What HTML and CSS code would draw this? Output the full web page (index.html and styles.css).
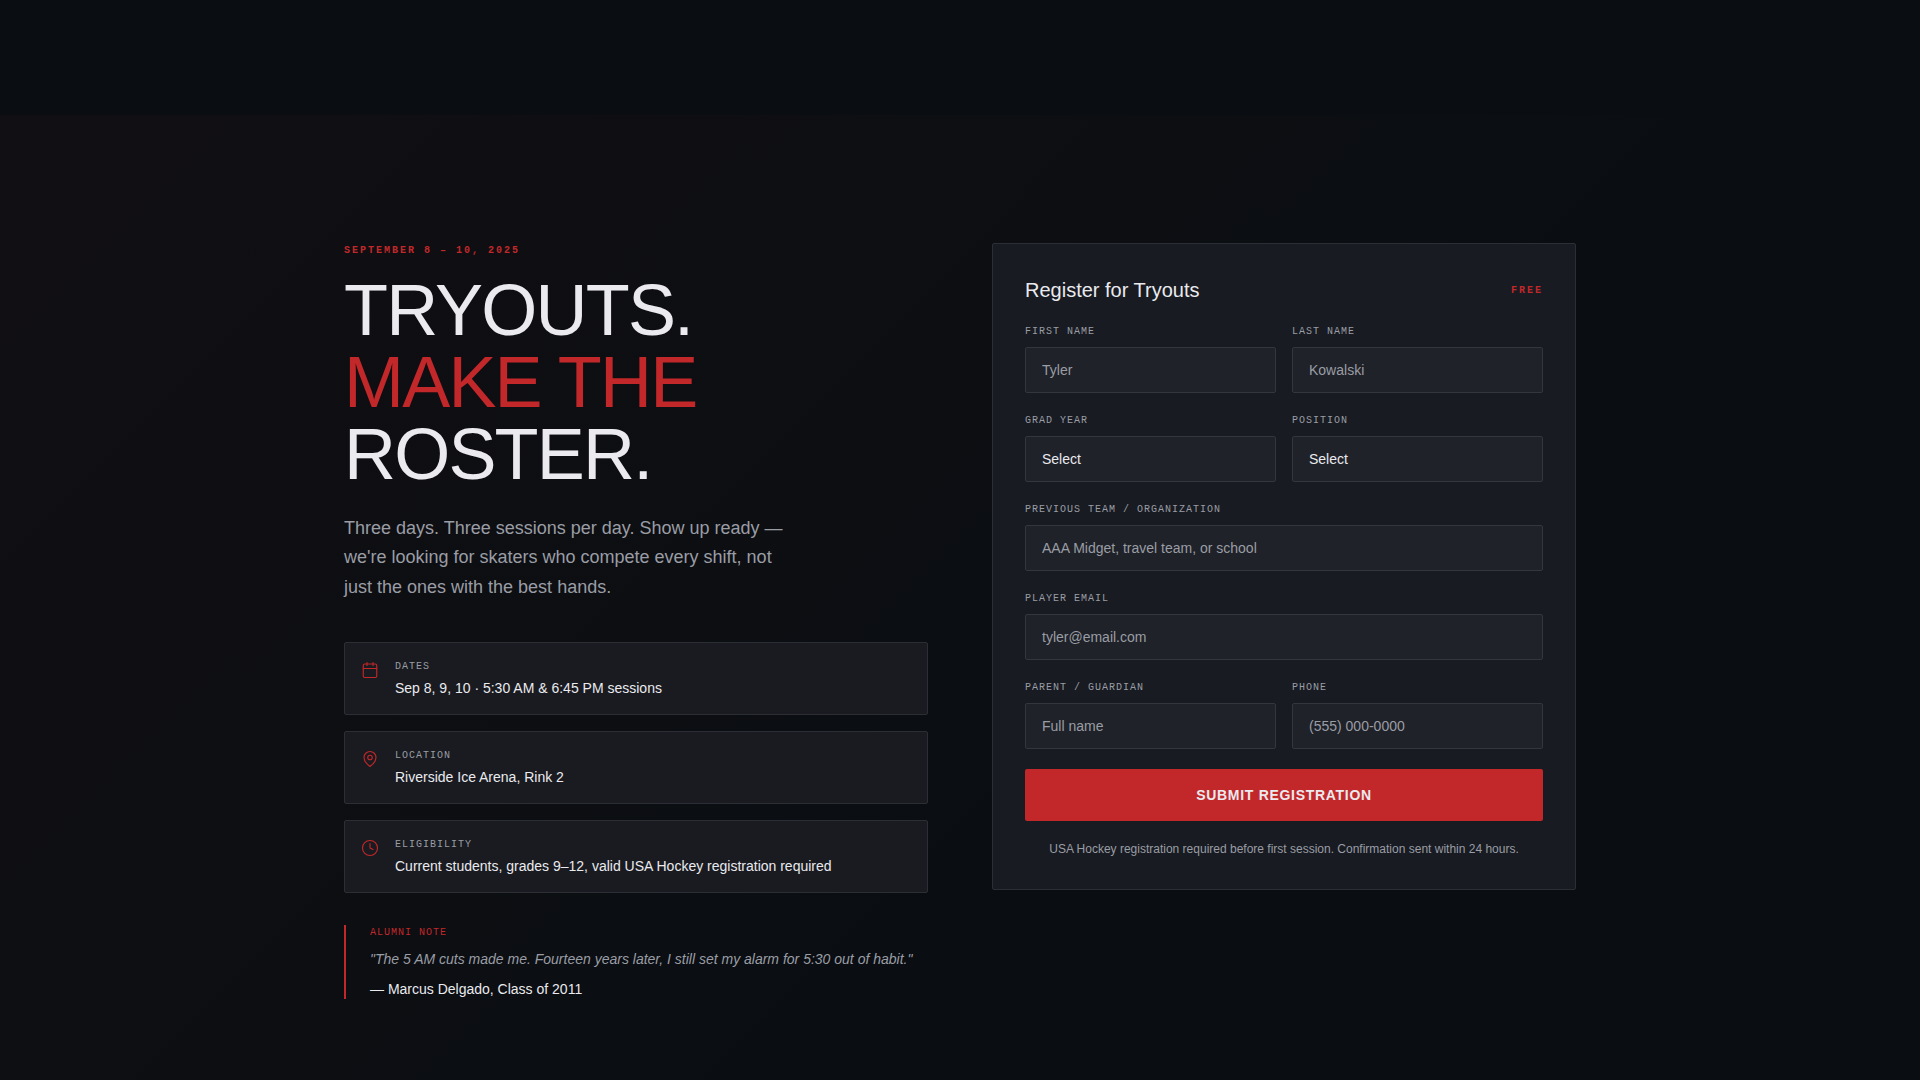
FILE: index.html
```
<!DOCTYPE html>
<html lang="en">
<head>
  <meta charset="UTF-8" />
  <meta name="viewport" content="width=device-width, initial-scale=1.0" />
  <title>Hockey Tryouts</title>
  <link rel="stylesheet" href="styles.css">
</head>
<body>

  <main class="tryouts">
    <div class="container">

      <div class="intro">
        <p class="eyebrow">SEPTEMBER 8 – 10, 2025</p>
        <h1 class="headline">TRYOUTS.<br><span class="accent">MAKE THE</span><br>ROSTER.</h1>
        <p class="lead">Three days. Three sessions per day. Show up ready — we're looking for skaters who compete every shift, not just the ones with the best hands.</p>

        <ul class="facts">
          <li class="fact">
            <svg class="icon" viewBox="0 0 24 24" aria-hidden="true">
              <rect x="3" y="4" width="18" height="18" rx="2" />
              <path d="M3 10h18M8 2v4M16 2v4" />
            </svg>
            <div>
              <div class="mono-label">DATES</div>
              <div class="fact-value">Sep 8, 9, 10 · 5:30 AM &amp; 6:45 PM sessions</div>
            </div>
          </li>
          <li class="fact">
            <svg class="icon" viewBox="0 0 24 24" aria-hidden="true">
              <path d="M20 10c0 6-8 12-8 12s-8-6-8-12a8 8 0 0 1 16 0z" />
              <circle cx="12" cy="10" r="3" />
            </svg>
            <div>
              <div class="mono-label">LOCATION</div>
              <div class="fact-value">Riverside Ice Arena, Rink 2</div>
            </div>
          </li>
          <li class="fact">
            <svg class="icon" viewBox="0 0 24 24" aria-hidden="true">
              <circle cx="12" cy="12" r="10" />
              <path d="M12 6v6l4 2" />
            </svg>
            <div>
              <div class="mono-label">ELIGIBILITY</div>
              <div class="fact-value">Current students, grades 9–12, valid USA Hockey registration required</div>
            </div>
          </li>
        </ul>

        <div class="alumni">
          <div class="mono-label accent">ALUMNI NOTE</div>
          <p class="quote">"The 5 AM cuts made me. Fourteen years later, I still set my alarm for 5:30 out of habit."</p>
          <p class="author">— Marcus Delgado, Class of 2011</p>
        </div>
      </div>

      <form class="card">
        <div class="card-head">
          <h2 class="card-title">Register for Tryouts</h2>
          <span class="tag">FREE</span>
        </div>

        <div class="row">
          <div class="field">
            <label class="mono-label" for="first">FIRST NAME</label>
            <input class="control" id="first" type="text" placeholder="Tyler">
          </div>
          <div class="field">
            <label class="mono-label" for="last">LAST NAME</label>
            <input class="control" id="last" type="text" placeholder="Kowalski">
          </div>
        </div>

        <div class="row">
          <div class="field">
            <label class="mono-label" for="grad">GRAD YEAR</label>
            <select class="control" id="grad">
              <option>Select</option>
              <option>2026</option>
              <option>2027</option>
              <option>2028</option>
              <option>2029</option>
            </select>
          </div>
          <div class="field">
            <label class="mono-label" for="position">POSITION</label>
            <select class="control" id="position">
              <option>Select</option>
              <option>Forward</option>
              <option>Defense</option>
              <option>Goalie</option>
            </select>
          </div>
        </div>

        <div class="field">
          <label class="mono-label" for="team">PREVIOUS TEAM / ORGANIZATION</label>
          <input class="control" id="team" type="text" placeholder="AAA Midget, travel team, or school">
        </div>

        <div class="field">
          <label class="mono-label" for="email">PLAYER EMAIL</label>
          <input class="control" id="email" type="email" placeholder="tyler@email.com">
        </div>

        <div class="row">
          <div class="field">
            <label class="mono-label" for="parent">PARENT / GUARDIAN</label>
            <input class="control" id="parent" type="text" placeholder="Full name">
          </div>
          <div class="field">
            <label class="mono-label" for="phone">PHONE</label>
            <input class="control" id="phone" type="tel" placeholder="(555) 000-0000">
          </div>
        </div>

        <button class="submit" type="submit">SUBMIT REGISTRATION</button>
        <p class="note">USA Hockey registration required before first session. Confirmation sent within 24 hours.</p>
      </form>

    </div>
  </main>

</body>
</html>
```

FILE: styles.css
```
* {
  box-sizing: border-box;
  margin: 0;
  padding: 0;
}

body {
  padding-top: 115px;
  background: #0a0e12;
  color: #eaeaef;
  font-family: "Liberation Sans", Arial, sans-serif;
  font-size: 14px;
  line-height: 20px;
}

.tryouts {
  padding: 128px 24px;
  background: linear-gradient(135deg, rgba(194, 40, 42, 0.04), rgba(194, 40, 42, 0) 60%);
}

.container {
  display: grid;
  grid-template-columns: 1fr 1fr;
  align-items: start;
  gap: 64px;
  max-width: 1232px;
  margin: 0 auto;
}

.accent {
  color: #c2282a;
}

.eyebrow,
.tag {
  color: #c2282a;
  font: bold 10px/15px "Liberation Mono", monospace;
  letter-spacing: 2px;
}

.headline {
  margin-top: 16px;
  font-size: 72px;
  font-weight: normal;
  line-height: 72px;
  letter-spacing: -0.025em;
}

.lead {
  max-width: 448px;
  margin-top: 24px;
  color: #9a9da5;
  font-size: 18px;
  line-height: 1.625;
}

.facts {
  display: grid;
  gap: 16px;
  margin-top: 40px;
  list-style: none;
}

.fact {
  display: flex;
  gap: 16px;
  padding: 16px;
  background: #191b20;
  border: 1px solid #2b2e34;
  border-radius: 2px;
}

.icon {
  flex: none;
  width: 18px;
  height: 18px;
  margin-top: 2px;
  fill: none;
  stroke: #c2282a;
  stroke-width: 1.5;
  stroke-linecap: round;
  stroke-linejoin: round;
}

.mono-label {
  display: block;
  font: 10px/15px "Liberation Mono", monospace;
  letter-spacing: 1px;
}

.mono-label:not(.accent) {
  color: #9a9da5;
}

.fact-value {
  margin-top: 4px;
}

.alumni {
  margin-top: 32px;
  padding-left: 24px;
  border-left: 2px solid #c2282a;
}

.quote {
  margin-top: 8px;
  color: #9a9da5;
  font-style: italic;
  line-height: 1.625;
}

.author {
  margin-top: 8px;
}

/* Registration form */
.card {
  display: grid;
  gap: 20px;
  padding: 32px;
  background: #181b21;
  border: 1px solid #2b2e34;
  border-radius: 2px;
}

.card-head {
  display: flex;
  justify-content: space-between;
  align-items: center;
}

.card-title {
  font-size: 20px;
  font-weight: normal;
  line-height: 28px;
}

.row {
  display: grid;
  grid-template-columns: 1fr 1fr;
  gap: 16px;
}

.control {
  display: block;
  width: 100%;
  height: 46px;
  margin-top: 8px;
  padding: 12px 16px;
  appearance: none;
  background: #1f2228;
  border: 1px solid #33363d;
  border-radius: 2px;
  color: #eaeaef;
  font: inherit;
}

.control::placeholder {
  color: #9a9da5;
}

.control:focus {
  border-color: #c2282a;
  outline: none;
}

.submit {
  padding: 16px;
  background: #c2282a;
  border: none;
  border-radius: 2px;
  color: #eaeaef;
  font: inherit;
  font-weight: bold;
  letter-spacing: 0.05em;
  cursor: pointer;
}

.note {
  color: #9a9da5;
  font-size: 12px;
  line-height: 16px;
  text-align: center;
}

@media (max-width: 900px) {
  .container {
    grid-template-columns: 1fr;
  }
}
```
